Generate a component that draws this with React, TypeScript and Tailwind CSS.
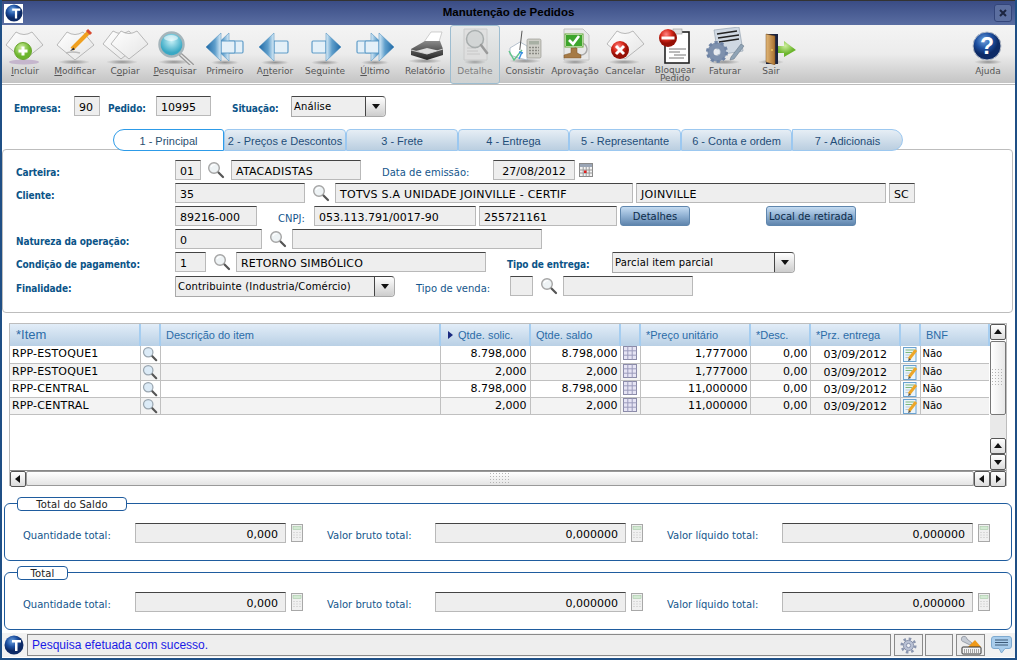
import React from "react";

const VERDANA = "font-['DejaVu_Sans',sans-serif]";

function Defs() {
  return (
    <svg width="0" height="0" className="absolute">
      <defs>
        <linearGradient id="arrow" x1="0" x2="1" y1="0" y2="0">
          <stop offset="0" stopColor="#1f68a4" />
          <stop offset="0.6" stopColor="#5f9fcc" />
          <stop offset="1" stopColor="#dcedf8" />
        </linearGradient>
        <linearGradient id="paper" x1="0" x2="1" y1="0" y2="1">
          <stop offset="0" stopColor="#ffffff" />
          <stop offset="1" stopColor="#e4e4e4" />
        </linearGradient>
        <radialGradient id="shadow">
          <stop offset="0" stopColor="#777" stopOpacity="0.75" />
          <stop offset="1" stopColor="#777" stopOpacity="0" />
        </radialGradient>
        <radialGradient id="lens" cx="0.5" cy="0.35">
          <stop offset="0" stopColor="#c8f2f8" />
          <stop offset="1" stopColor="#38a8c4" />
        </radialGradient>
        <radialGradient id="ball" cx="0.4" cy="0.3">
          <stop offset="0" stopColor="#6fa4e0" />
          <stop offset="0.6" stopColor="#1d4fa0" />
          <stop offset="1" stopColor="#0d2a66" />
        </radialGradient>
        <radialGradient id="red" cx="0.4" cy="0.3">
          <stop offset="0" stopColor="#f88" />
          <stop offset="0.6" stopColor="#d92a1c" />
          <stop offset="1" stopColor="#961006" />
        </radialGradient>
        <radialGradient id="green" cx="0.4" cy="0.3">
          <stop offset="0" stopColor="#cfeea0" />
          <stop offset="1" stopColor="#6bb52c" />
        </radialGradient>
        <linearGradient id="door" x1="0" x2="1">
          <stop offset="0" stopColor="#e3b878" />
          <stop offset="1" stopColor="#a8702f" />
        </linearGradient>
        <linearGradient id="print" x1="0" x2="0" y1="0" y2="1">
          <stop offset="0" stopColor="#8a8a8a" />
          <stop offset="1" stopColor="#222" />
        </linearGradient>
      </defs>
    </svg>
  );
}

const Shadow = ({ cx = 25, cy = 35, rx = 16 }: { cx?: number; cy?: number; rx?: number }) => (
  <ellipse cx={cx} cy={cy} rx={rx} ry="2.5" fill="url(#shadow)" />
);

const DIAMOND = "M6 18 L16 5 Q24 10 32 5 L43 18 L24 33 Z";

function IconSvg({ children }: { children: React.ReactNode }) {
  return (
    <svg width="50" height="38" viewBox="0 0 50 38" className="block">
      {children}
    </svg>
  );
}

function Diamond({ dx = 0, dy = 0 }: { dx?: number; dy?: number }) {
  return <path d={DIAMOND} transform={`translate(${dx} ${dy})`} fill="url(#paper)" stroke="#a8a8a8" strokeWidth="0.8" />;
}

function ArrowIcon({ double, flip }: { double?: boolean; flip?: boolean }) {
  const one = (dx: number) => (
    <g transform={`translate(${dx} 0)`}>
      <path d="M24 14 H37 Q38 14 38 15.5 V24.5 Q38 26 37 26 H24 Z" fill="#e4f0f8" stroke="#5f9cc8" strokeWidth="1.2" />
      <path d="M9 20 L24 6 V34 Z" fill="url(#arrow)" stroke="#3f86bb" strokeWidth="0.5" />
    </g>
  );
  return (
    <IconSvg>
      <Shadow cy={35.5} rx={14} />
      <g transform={flip ? "translate(50 0) scale(-1 1)" : undefined}>
        {double ? (
          <>
            {one(5)}
            {one(-3)}
          </>
        ) : (
          one(0)
        )}
      </g>
    </IconSvg>
  );
}

const IncluirIcon = () => (
  <IconSvg>
    <ellipse cx="24" cy="35" rx="15" ry="2.5" fill="#b9a4c4" opacity="0.7" />
    <Diamond />
    <circle cx="23" cy="24" r="8.5" fill="url(#green)" stroke="#6aa52e" />
    <path d="M23 19.5 V28.5 M18.5 24 H27.5" stroke="#fff" strokeWidth="3" />
  </IconSvg>
);

const ModificarIcon = () => (
  <IconSvg>
    <Shadow cx={24} />
    <Diamond dx={1} />
    <path d="M22 22 L39 5" stroke="#f0a020" strokeWidth="4" />
    <path d="M37 3 L41 7" stroke="#d84a30" strokeWidth="3" />
    <path d="M23.5 20.5 L20 24 L25 22.5 Z" fill="#333" />
    <path d="M16 26 Q22 24 30 26" stroke="#bbb" strokeWidth="1.5" fill="none" />
  </IconSvg>
);

const CopiarIcon = () => (
  <IconSvg>
    <Shadow cx={22} />
    <Diamond dx={-3} dy={-1} />
    <Diamond dx={5} dy={-1} />
  </IconSvg>
);

const PesquisarIcon = () => (
  <IconSvg>
    <Shadow cx={24} cy={35} />
    <path d="M31 28 L42 38" stroke="#999" strokeWidth="4" strokeLinecap="round" />
    <path d="M31 28 L42 38" stroke="#e6e6e6" strokeWidth="1.5" strokeLinecap="round" />
    <circle cx="21.5" cy="17.5" r="12" fill="url(#lens)" stroke="#a5b5bb" strokeWidth="2.5" />
    <ellipse cx="21" cy="11" rx="7" ry="3" fill="#fff" opacity="0.55" />
  </IconSvg>
);

const RelatorioIcon = () => (
  <IconSvg>
    <Shadow cy={34} rx={17} />
    <path d="M24 15 L31 5 H42 L38 18 Z" fill="#fff" stroke="#bbb" strokeWidth="0.7" />
    <path d="M11 22 L25 14 H40 L43 22 V28 L27 33 L11 28 Z" fill="url(#print)" />
    <path d="M11 23 L27 27 L43 22" stroke="#ccc" strokeWidth="1" fill="none" />
    <path d="M16 24 L27 27 L38 23.5 L27 21 Z" fill="#ddd" />
  </IconSvg>
);

const DetalheIcon = () => (
  <IconSvg>
    <g opacity="0.8">
      <Shadow cy={35} rx={11} />
      <path d="M14 2 H37 V33 H14 Z" fill="#dfdfdf" stroke="#c6c6c6" />
      <path d="M17 21 H26 M17 24 H28 M17 27 H30" stroke="#c2c2c2" />
      <circle cx="25" cy="12" r="8.5" fill="#cfd2d2" stroke="#9aa0a0" strokeWidth="1.5" />
      <path d="M31 18 L37 26" stroke="#8a8a8a" strokeWidth="2.5" strokeLinecap="round" />
    </g>
  </IconSvg>
);

const ConsistirIcon = () => (
  <IconSvg>
    <Shadow cy={34} rx={16} />
    <path d="M10 21 L20 15 L27 19 V33 L19 31 L10 28 Z" fill="#fff" stroke="#9ab" strokeWidth="0.7" />
    <path d="M7 4 L14 22" stroke="#444" strokeWidth="0.8" transform="translate(10 0) rotate(28 10 14)" />
    <path d="M9 24 L14 33 L22 23" stroke="#5fc58a" strokeWidth="1.4" fill="none" />
    <path d="M19 32 L22 25 M19 25 L23 26" stroke="#3a8fe0" strokeWidth="1.4" />
    <rect x="27" y="12" width="14" height="19" rx="1.5" fill="#cfcfc8" stroke="#8f8f88" strokeWidth="0.6" />
    <rect x="29" y="14" width="10" height="3.5" fill="#a8b0a4" />
    <path d="M29 20.5 H39 M29 23.5 H39 M29 26.5 H39" stroke="#8a8a84" strokeWidth="1.3" strokeDasharray="2 1" />
  </IconSvg>
);

const AprovacaoIcon = () => (
  <IconSvg>
    <Shadow cx={25} cy={35} rx={13} />
    <path d="M14 2 H33 L39 8 V33 H14 Z" fill="#e8e8e8" stroke="#c2c2c2" />
    <circle cx="31" cy="22" r="6" fill="none" stroke="#aaa" strokeWidth="1.5" />
    <rect x="15" y="7" width="18" height="13" fill="#fff" stroke="#62a832" />
    <rect x="16" y="8" width="16" height="11" fill="#3da52c" />
    <path d="M19 13 L23 17 L29 9" stroke="#fff" strokeWidth="2.6" fill="none" />
    <path d="M21 21 H27 V26 L31 28 V31 H14 V28 L21 26 Z" fill="#a67a45" stroke="#7c5729" strokeWidth="0.5" />
  </IconSvg>
);

const CancelarIcon = () => (
  <IconSvg>
    <Shadow cx={24} />
    <Diamond dx={1} dy={-1} />
    <circle cx="20" cy="23" r="9" fill="url(#red)" />
    <path d="M16 19 L24 27 M24 19 L16 27" stroke="#fff" strokeWidth="3" />
  </IconSvg>
);

const BloquearIcon = () => (
  <IconSvg>
    <rect x="15" y="5" width="24" height="31" fill="#fff" stroke="#222" strokeWidth="1.6" />
    <rect x="23" y="2" width="9" height="5" fill="#ddd" stroke="#999" strokeWidth="0.6" />
    <path d="M19 22 H36 M19 25 H30 M24 28 H36 M19 31 H34" stroke="#777" />
    <circle cx="18" cy="11" r="9" fill="url(#red)" />
    <rect x="11.5" y="9.5" width="13" height="3" fill="#fff" />
  </IconSvg>
);

const FaturarIcon = () => (
  <IconSvg>
    <Shadow cx={24} cy={35} rx={16} />
    <path d="M14 3 L39 0 L43 24 L18 28 Z" fill="#cfd8e2" stroke="#8a98a8" strokeWidth="0.6" />
    <path d="M17 7 L37 4 M18 11 L39 8 M19 15 L39 12" stroke="#222" strokeWidth="1.5" />
    <path d="M31 30 L41 17 L44 19 L34 32 L30 33 Z" fill="#8fa3b5" stroke="#5f6f7f" strokeWidth="0.5" />
    <circle cx="17" cy="25" r="6.5" fill="none" stroke="#7d90ad" strokeWidth="6" />
    <circle cx="17" cy="25" r="9.5" fill="none" stroke="#6f84a5" strokeWidth="3" strokeDasharray="3.2 2.8" />
    <circle cx="17" cy="25" r="2.5" fill="#e6ebf2" />
  </IconSvg>
);

const SairIcon = () => (
  <IconSvg>
    <g transform="translate(5 0)">
      <Shadow cx={20} cy={35} rx={13} />
      <path d="M15 7 H27 V37 H15 Z" fill="#1c2440" />
      <path d="M15 7 L24 9 V38 L15 35 Z" fill="url(#door)" stroke="#7c5222" strokeWidth="0.5" />
      <circle cx="21" cy="23" r="0.9" fill="#f4d060" />
      <path d="M27 19 H33 V14 L45 23 L33 30 V26 H27 Z" fill="url(#green)" />
    </g>
  </IconSvg>
);

const AjudaIcon = () => (
  <IconSvg>
    <Shadow cy={35} rx={14} />
    <circle cx="24" cy="19" r="14" fill="url(#ball)" stroke="#b9bfc9" strokeWidth="1" />
    <text x="24" y="27" textAnchor="middle" fontFamily="'Liberation Sans',sans-serif" fontWeight="700" fontSize="23" fill="#fff">
      ?
    </text>
  </IconSvg>
);

function TotvsLogo({ size }: { size: number }) {
  return (
    <svg width={size} height={size} viewBox="0 0 20 20" className="block">
      <circle cx="10" cy="10" r="9.5" fill="url(#ball)" />
      <path d="M8 5 H17 V7.5 H13.5 V16 H11 V7.5 H8 Z" fill="#fff" />
    </svg>
  );
}

function Lupa() {
  return (
    <svg width="18" height="18" viewBox="0 0 18 18" className="block">
      <path d="M10.5 10.5 L16 16" stroke="#555" strokeWidth="2.2" strokeLinecap="round" />
      <circle cx="7" cy="7" r="5.3" fill="#eef3f5" stroke="#a5a5a5" strokeWidth="1.4" />
      <path d="M4 6 Q5 3.5 8 3.5" stroke="#fff" strokeWidth="1.2" fill="none" />
    </svg>
  );
}

function GridLupa() {
  return (
    <svg width="16" height="16" viewBox="0 0 18 18" className="block">
      <path d="M10.5 10.5 L16 16" stroke="#555" strokeWidth="2.4" strokeLinecap="round" />
      <circle cx="7" cy="7" r="5.3" fill="#dcebf7" stroke="#9aa6b0" strokeWidth="1.4" />
    </svg>
  );
}

function TableIcon() {
  return (
    <svg width="14" height="14" viewBox="0 0 14 14" className="block">
      <rect x="0.5" y="0.5" width="13" height="13" fill="#e6e4f4" stroke="#8b8ba8" />
      <path d="M4.8 0.5 V13.5 M9.2 0.5 V13.5 M0.5 4.8 H13.5 M0.5 9.2 H13.5" stroke="#9c9cbc" />
    </svg>
  );
}

function CalendarIcon() {
  return (
    <svg width="14" height="14" viewBox="0 0 14 14" className="block">
      <rect x="0.5" y="0.5" width="13" height="13" fill="#f2f2f2" stroke="#8a8a8a" />
      <rect x="1" y="1" width="12" height="3" fill="#9aa5b5" />
      <path d="M4.2 4 V13.5 M7.2 4 V13.5 M10.2 4 V13.5 M0.5 7 H13.5 M0.5 10 H13.5" stroke="#9a9a9a" />
      <rect x="5" y="7.5" width="2.5" height="2.5" fill="#e02020" />
    </svg>
  );
}

function EditIcon() {
  return (
    <svg width="15" height="16" viewBox="0 0 15 16" className="block">
      <rect x="0.5" y="1.5" width="12.5" height="14" fill="#eaf4fb" stroke="#6aa2d0" />
      <path d="M2.5 4 H11 M2.5 6.5 H9" stroke="#7cb87c" />
      <path d="M2.5 9 H7 M2.5 11.5 H5" stroke="#b8c8d8" />
      <path d="M6 13 L13 4" stroke="#eda628" strokeWidth="3" />
      <path d="M5 15 L6 12 L8 14 Z" fill="#555" />
    </svg>
  );
}

function CalcIcon() {
  return (
    <svg width="12" height="18" viewBox="0 0 12 18" className="block">
      <rect x="0.5" y="0.5" width="11" height="17" fill="#f0f0f0" stroke="#a8a8a8" />
      <rect x="2" y="2.5" width="8" height="3" fill="#d3ead3" stroke="#9cc49c" strokeWidth="0.5" />
      <path d="M2 8.5 H10 M2 11 H10 M2 13.5 H10" stroke="#d8d8d8" strokeDasharray="2 1" />
    </svg>
  );
}

function Gear({ size }: { size: number }) {
  return (
    <svg width={size} height={size} viewBox="0 0 20 20" className="block">
      <circle cx="10" cy="10" r="6" fill="#b9c1d4" stroke="#7d88a3" />
      <circle cx="10" cy="10" r="8" fill="none" stroke="#8a95ae" strokeWidth="3" strokeDasharray="3 3.28" />
      <circle cx="10" cy="10" r="2.5" fill="#eef0f5" stroke="#7d88a3" />
    </svg>
  );
}

function ToolsIcon() {
  return (
    <svg width="24" height="20" viewBox="0 0 24 20" className="block">
      <path d="M3 2 Q1 6 5 7 L11 10 L13 8 L8 4 Q7 0 3 2 Z" fill="#c5cbd4" stroke="#7f8794" strokeWidth="0.7" />
      <path d="M9 12 L16 5 L22 12 Z" fill="#ef9a1a" />
      <rect x="3" y="12" width="19" height="7" rx="1" fill="#f4f4f4" stroke="#333" />
      <path d="M5 15 H20 M5 17 H20" stroke="#555" strokeDasharray="1 1" />
    </svg>
  );
}

function ChatIcon() {
  return (
    <svg width="21" height="18" viewBox="0 0 21 18" className="block">
      <path d="M3 0.5 H18 Q20.5 0.5 20.5 3 V10 Q20.5 12.5 18 12.5 H14 L10.5 17 L8 12.5 H3 Q0.5 12.5 0.5 10 V3 Q0.5 0.5 3 0.5 Z" fill="#a9cdec" stroke="#7eaad0" />
      <path d="M4 4 H17 M4 6.5 H17 M4 9 H17" stroke="#3d5a78" />
    </svg>
  );
}

function Tri({ dir }: { dir: "up" | "down" | "left" | "right" }) {
  const points = { up: "1,7 9,7 5,2", down: "1,3 9,3 5,8", left: "7,1 7,9 2,5", right: "3,1 3,9 8,5" }[dir];
  return (
    <svg width="10" height="10" viewBox="0 0 10 10" className="block">
      <polygon points={points} fill="#111" />
    </svg>
  );
}

function Grip({ cols, rows }: { cols: number; rows: number }) {
  const dots: React.ReactNode[] = [];
  for (let y = 0; y < rows; y++)
    for (let x = 0; x < cols; x++) dots.push(<rect key={`${x}-${y}`} x={x * 3} y={y * 3} width="1" height="1" fill="#b5b5b5" />);
  return (
    <svg width={cols * 3} height={rows * 3} className="block">
      {dots}
    </svg>
  );
}

function ScrollBtn({ dir, className = "" }: { dir: "up" | "down" | "left" | "right"; className?: string }) {
  return (
    <div className={`flex h-[16px] w-[16px] shrink-0 items-center justify-center rounded-[2px] border border-[#555] bg-gradient-to-b from-white to-[#dcdcdc] ${className}`}>
      <Tri dir={dir} />
    </div>
  );
}

function Field({ className = "", right, children }: { className?: string; right?: boolean; children?: React.ReactNode }) {
  return (
    <div
      className={`flex h-[20px] shrink-0 items-center overflow-hidden whitespace-nowrap border border-[#b9b9b9] border-t-[#444] bg-[#eeeeee] px-[4px] pt-[4px] text-[11px] text-black ${right ? "justify-end pr-[7px]" : ""} ${className}`}
    >
      {children}
    </div>
  );
}

function Select({ className = "", children }: { className?: string; children: React.ReactNode }) {
  return (
    <div className={`flex h-[21px] shrink-0 items-center rounded-r-[4px] border border-[#a9a9a9] border-t-[#444] bg-[#eeeeee] text-[10px] tracking-[0.15px] text-black ${className}`}>
      <span className="flex-1 overflow-hidden whitespace-nowrap pl-[2px] pt-[1px]">{children}</span>
      <span className="flex h-full w-[20px] items-center justify-center rounded-r-[4px] border-l border-[#444] bg-gradient-to-b from-white to-[#cdcdcd]">
        <Tri dir="down" />
      </span>
    </div>
  );
}

function BoldLabel({ className = "", children }: { className?: string; children?: React.ReactNode }) {
  return (
    <span className={`shrink-0 whitespace-nowrap pt-[4px] font-['DejaVu_Sans_Condensed','DejaVu_Sans',sans-serif] text-[10px] font-bold tracking-[-0.1px] text-[#0b5488] ${className}`}>
      {children}
    </span>
  );
}

function PlainLabel({ className = "", children }: { className?: string; children?: React.ReactNode }) {
  return <span className={`shrink-0 whitespace-nowrap pt-[5px] text-[10px] text-[#14568c] ${className}`}>{children}</span>;
}

function BlueButton({ className = "", children }: { className?: string; children: React.ReactNode }) {
  return (
    <div className={`flex h-[20px] shrink-0 items-center justify-center rounded-[3px] border border-[#5f86ad] bg-gradient-to-b from-[#c5dcf2] via-[#8fb0d2] to-[#5f85ad] text-[10px] text-[#0d2c4a] ${className}`}>
      {children}
    </div>
  );
}

function ToolItem({ label, icon, className = "w-[50px]", textClass = "text-[#555]" }: { label: React.ReactNode; icon: React.ReactNode; className?: string; textClass?: string }) {
  return (
    <div className={`flex shrink-0 flex-col items-center pt-[2px] ${className}`}>
      {icon}
      <div className={`mt-[1px] whitespace-nowrap text-center text-[9px] leading-[10px] ${textClass}`}>{label}</div>
    </div>
  );
}

const tabs = [
  { label: "2 - Preços e Descontos", w: "w-[122px]" },
  { label: "3 - Frete", w: "w-[112px]" },
  { label: "4 - Entrega", w: "w-[111px]" },
  { label: "5 - Representante", w: "w-[112px]" },
  { label: "6 - Conta e ordem", w: "w-[111px]" },
];

const rows = [
  { item: "RPP-ESTOQUE1", solic: "8.798,000", saldo: "8.798,000", preco: "1,777000" },
  { item: "RPP-ESTOQUE1", solic: "2,000", saldo: "2,000", preco: "1,777000" },
  { item: "RPP-CENTRAL", solic: "8.798,000", saldo: "8.798,000", preco: "11,000000" },
  { item: "RPP-CENTRAL", solic: "2,000", saldo: "2,000", preco: "11,000000" },
];

const TH = "border-r-2 border-[#a5cdf0] bg-gradient-to-b from-[#e2edf8] to-[#b9d0e5] pl-[5px] text-left text-[11px] font-normal text-[#2b6ca8]";
const TD = "h-[17px] border-r border-b border-[#c0c0c0] p-0 leading-[14px]";

function GroupBox({ title, legendClass, className = "" }: { title: string; legendClass: string; className?: string }) {
  return (
    <div className={`ml-[4px] h-[58px] w-[1008px] shrink-0 rounded-[6px] border border-[#1f5c9e] ${className}`}>
      <div className={`ml-[12px] -mt-[7px] flex h-[14px] items-center justify-center rounded-[4px] border border-[#1f5c9e] bg-white pt-[1px] text-[10px] leading-none tracking-[0.1px] text-[#222] ${legendClass}`}>
        {title}
      </div>
      <div className="mt-[12px] flex items-center pl-[18px]">
        <PlainLabel className="w-[112px]">Quantidade total:</PlainLabel>
        <Field right className="w-[151px]">0,000</Field>
        <span className="ml-[5px] w-[12px]"><CalcIcon /></span>
        <PlainLabel className="ml-[24px] w-[108px]">Valor bruto total:</PlainLabel>
        <Field right className="w-[191px]">0,000000</Field>
        <span className="ml-[5px] w-[12px]"><CalcIcon /></span>
        <PlainLabel className="ml-[24px] w-[115px]">Valor líquido total:</PlainLabel>
        <Field right className="w-[191px]">0,000000</Field>
        <span className="ml-[5px] w-[12px]"><CalcIcon /></span>
      </div>
    </div>
  );
}

export default function App() {
  return (
    <div className={`relative flex h-[660px] w-[1017px] flex-col overflow-hidden bg-white ${VERDANA}`}>
      <Defs />
      {/* title bar */}
      <div className="flex h-[25px] shrink-0 items-center justify-between border-t border-[#333] bg-gradient-to-b from-[#3a4c85] to-[#5a6ea2] pl-[4px] pr-[5px]">
        <div className="flex h-[19px] w-[19px] items-center justify-center bg-white">
          <TotvsLogo size={18} />
        </div>
        <div className="font-['Liberation_Sans',sans-serif] text-[11.5px] font-bold text-black">Manutenção de Pedidos</div>
        <div className="flex h-[18px] w-[18px] items-center justify-center rounded-[3px] border border-[#33457a] bg-[#5c6fa0]">
          <svg width="8" height="8" viewBox="0 0 8 8">
            <path d="M1 1 L7 7 M7 1 L1 7" stroke="#1c2540" strokeWidth="2" />
          </svg>
        </div>
      </div>

      {/* toolbar */}
      <div className="flex h-[58px] shrink-0 bg-gradient-to-b from-[#f4f4f4] via-[#ececec] to-[#c4c4c4] pr-[4px]">
        <ToolItem label={<><u>I</u>ncluir</>} icon={<IncluirIcon />} />
        <ToolItem label={<><u>M</u>odificar</>} icon={<ModificarIcon />} />
        <ToolItem label={<>C<u>o</u>piar</>} icon={<CopiarIcon />} />
        <ToolItem label={<><u>P</u>esquisar</>} icon={<PesquisarIcon />} />
        <ToolItem label="Primeiro" icon={<ArrowIcon double />} />
        <ToolItem label={<>A<u>n</u>terior</>} icon={<ArrowIcon />} />
        <ToolItem label={<>Se<u>g</u>uinte</>} icon={<ArrowIcon flip />} />
        <ToolItem label={<><u>Ú</u>ltimo</>} icon={<ArrowIcon double flip />} />
        <ToolItem label="Relatório" icon={<RelatorioIcon />} />
        <ToolItem
          label="Detalhe"
          icon={<DetalheIcon />}
          textClass="text-[#808080]"
          className="-mb-[1px] w-[50px] rounded-[3px] border border-[#9dbdd0] bg-gradient-to-b from-[#e8eaea] to-[#cfd2d2] !pt-[1px] [&>svg]:-mx-[1px]"
        />
        <ToolItem label="Consistir" icon={<ConsistirIcon />} />
        <ToolItem label="Aprovação" icon={<AprovacaoIcon />} />
        <ToolItem label="Cancelar" icon={<CancelarIcon />} />
        <ToolItem label={<span className="block leading-[8px]">Bloquear<br />Pedido</span>} icon={<BloquearIcon />} />
        <ToolItem label="Faturar" icon={<FaturarIcon />} />
        <ToolItem label="Sair" icon={<SairIcon />} className="w-[42px] [&>svg]:-mx-[4px]" />
        <ToolItem label="Ajuda" icon={<AjudaIcon />} className="ml-auto w-[50px]" />
      </div>
      <div className="mt-[1px] h-[1px] shrink-0 bg-[#bcbcbc]" />

      {/* cabecalho do pedido */}
      <div className="mt-[11px] flex h-[20px] shrink-0 items-center pl-[14px]">
        <BoldLabel className="w-[60px]">Empresa:</BoldLabel>
        <Field className="w-[26px]">90</Field>
        <BoldLabel className="ml-[8px] w-[48px]">Pedido:</BoldLabel>
        <Field className="w-[55px]">10995</Field>
        <BoldLabel className="ml-[21px] w-[59px]">Situação:</BoldLabel>
        <Select className="w-[95px]">Análise</Select>
      </div>

      {/* abas */}
      <div className="relative z-10 mt-[13px] flex h-[22px] shrink-0 pl-[113px] font-['Liberation_Sans',sans-serif] text-[11px] text-[#1f4d78]">
        <div className="flex w-[111px] items-center justify-center rounded-l-[11px] rounded-tr-[3px] border border-[#2d9be8] bg-white pt-[2px] text-[#2a4f70]">1 - Principal</div>
        {tabs.map((t) => (
          <div key={t.label} className={`flex ${t.w} items-center justify-center whitespace-nowrap rounded-t-[4px] border border-[#9cc8f0] bg-gradient-to-b from-[#e6eef5] to-[#bacee0] pt-[2px]`}>
            {t.label}
          </div>
        ))}
        <div className="flex w-[111px] items-center justify-center rounded-r-[11px] border border-[#9cc8f0] bg-gradient-to-b from-[#e6eef5] to-[#bacee0] pt-[2px]">7 - Adicionais</div>
      </div>

      {/* formulario principal */}
      <div className="ml-[2px] -mt-[2px] flex h-[164px] w-[1011px] shrink-0 flex-col rounded-[4px] border border-[#bdbdbd] pl-[13px] pt-[10px]">
        <div className="flex h-[20px] items-center">
          <BoldLabel className="w-[159px]">Carteira:</BoldLabel>
          <Field className="w-[26px]">01</Field>
          <span className="ml-[6px] w-[19px]"><Lupa /></span>
          <Field className="ml-[5px] w-[130px] tracking-[0.25px]">ATACADISTAS</Field>
          <PlainLabel className="ml-[21px] w-[90px]">Data de emissão:</PlainLabel>
          <Field className="ml-[21px] w-[82px] justify-center">27/08/2012</Field>
          <span className="ml-[4px]"><CalendarIcon /></span>
        </div>
        <div className="mt-[3px] flex h-[20px] items-center">
          <BoldLabel className="w-[159px]">Cliente:</BoldLabel>
          <Field className="w-[130px]">35</Field>
          <span className="ml-[7px] w-[18px]"><Lupa /></span>
          <Field className="ml-[5px] w-[298px] tracking-[0.25px]">TOTVS S.A UNIDADE JOINVILLE - CERTIF</Field>
          <Field className="ml-[3px] w-[250px] tracking-[0.25px]">JOINVILLE</Field>
          <Field className="ml-[3px] w-[26px]">SC</Field>
        </div>
        <div className="mt-[3px] flex h-[20px] items-center">
          <BoldLabel className="w-[159px]" />
          <Field className="w-[82px]">89216-000</Field>
          <PlainLabel className="ml-[21px] w-[36px]">CNPJ:</PlainLabel>
          <Field className="w-[162px]">053.113.791/0017-90</Field>
          <Field className="ml-[3px] w-[138px]">255721161</Field>
          <BlueButton className="ml-[3px] w-[70px]">Detalhes</BlueButton>
          <BlueButton className="ml-[76px] w-[90px]">Local de retirada</BlueButton>
        </div>
        <div className="mt-[3px] flex h-[20px] items-center">
          <BoldLabel className="w-[159px]">Natureza da operação:</BoldLabel>
          <Field className="w-[87px]">0</Field>
          <span className="ml-[7px] w-[18px]"><Lupa /></span>
          <Field className="ml-[5px] w-[250px]" />
        </div>
        <div className="mt-[3px] flex h-[20px] items-center">
          <BoldLabel className="w-[159px]">Condição de pagamento:</BoldLabel>
          <Field className="w-[31px]">1</Field>
          <span className="ml-[7px] w-[18px]"><Lupa /></span>
          <Field className="ml-[5px] w-[250px] tracking-[0.15px]">RETORNO SIMBÓLICO</Field>
          <BoldLabel className="ml-[21px] w-[105px]">Tipo de entrega:</BoldLabel>
          <Select className="w-[183px]">Parcial item parcial</Select>
        </div>
        <div className="mt-[4px] flex h-[20px] items-center">
          <BoldLabel className="w-[159px]">Finalidade:</BoldLabel>
          <Select className="w-[220px]">Contribuinte (Industria/Comércio)</Select>
          <PlainLabel className="ml-[21px] w-[94px]">Tipo de venda:</PlainLabel>
          <Field className="w-[23px]" />
          <span className="ml-[7px] w-[18px]"><Lupa /></span>
          <Field className="ml-[5px] w-[130px]" />
        </div>
      </div>

      {/* grade de itens */}
      <div className="ml-[9px] mt-[10px] flex h-[163px] w-[998px] shrink-0 flex-col border border-[#bdbdbd]">
        <div className="flex h-[146px] shrink-0">
          <div className="w-[979px] shrink-0">
            <table className="w-[979px] table-fixed border-collapse">
              <colgroup>
                <col className="w-[130px]" />
                <col className="w-[20px]" />
                <col className="w-[280px]" />
                <col className="w-[90px]" />
                <col className="w-[90px]" />
                <col className="w-[20px]" />
                <col className="w-[110px]" />
                <col className="w-[60px]" />
                <col className="w-[90px]" />
                <col className="w-[20px]" />
                <col className="w-[69px]" />
              </colgroup>
              <thead>
                <tr className="h-[22px] font-['Liberation_Sans',sans-serif]">
                  <th className={`${TH} !pl-[6px] !text-[13px]`}>*Item</th>
                  <th className={TH} />
                  <th className={TH}>Descrição do item</th>
                  <th className={`${TH} !pl-[7px]`}>
                    <span className="mr-[5px] inline-block border-y-[4px] border-l-[5px] border-y-transparent border-l-[#1a2a80]" />
                    Qtde. solic.
                  </th>
                  <th className={TH}>Qtde. saldo</th>
                  <th className={TH} />
                  <th className={TH}>*Preço unitário</th>
                  <th className={TH}>*Desc.</th>
                  <th className={TH}>*Prz. entrega</th>
                  <th className={TH} />
                  <th className={TH}>BNF</th>
                </tr>
              </thead>
              <tbody className="text-[11px] text-black">
                {rows.map((r, i) => (
                  <tr key={i} className={i % 2 ? "bg-[#f3f3f3]" : "bg-white"}>
                    <td className={`${TD} pl-[2px] tracking-[0.15px]`}>{r.item}</td>
                    <td className={TD}><div className="flex h-[16px] justify-center overflow-hidden"><GridLupa /></div></td>
                    <td className={TD} />
                    <td className={`${TD} pr-[3px] text-right`}>{r.solic}</td>
                    <td className={`${TD} pr-[2px] text-right`}>{r.saldo}</td>
                    <td className={TD}><div className="flex h-[16px] justify-center overflow-hidden"><TableIcon /></div></td>
                    <td className={`${TD} pr-[2px] text-right`}>{r.preco}</td>
                    <td className={`${TD} pr-[2px] text-right`}>0,00</td>
                    <td className={`${TD} pl-[13px] pt-[2px]`}>03/09/2012</td>
                    <td className={TD}><div className="flex h-[16px] justify-center overflow-hidden"><EditIcon /></div></td>
                    <td className={`${TD} border-r-0 pl-[2px] text-[10px]`}>Não</td>
                  </tr>
                ))}
              </tbody>
            </table>
          </div>
          <div className="ml-[1px] flex w-[16px] shrink-0 flex-col">
            <ScrollBtn dir="up" />
            <div className="mt-[1px] flex h-[74px] w-[16px] items-center justify-center rounded-[2px] border border-[#777] bg-gradient-to-r from-white to-[#e8e8e8]">
              <Grip cols={4} rows={6} />
            </div>
            <div className="h-[23px] bg-[#e9e9e9]" />
            <ScrollBtn dir="up" />
            <ScrollBtn dir="down" />
          </div>
        </div>
        <div className="flex h-[16px] shrink-0 border-t border-[#888]">
          <ScrollBtn dir="left" />
          <div className="flex flex-1 items-center justify-center rounded-[2px] border border-[#999] bg-gradient-to-b from-white to-[#e4e4e4]">
            <Grip cols={7} rows={4} />
          </div>
          <ScrollBtn dir="left" />
          <ScrollBtn dir="right" />
        </div>
      </div>

      {/* totais */}
      <GroupBox title="Total do Saldo" legendClass="w-[110px]" className="mt-[17px]" />
      <GroupBox title="Total" legendClass="w-[51px]" className="mt-[11px]" />

      {/* barra de status */}
      <div className="mt-[3px] flex h-[24px] shrink-0 items-center bg-[#f2f2f2] pl-[4px]">
        <TotvsLogo size={20} />
        <div className="ml-[3px] flex h-[22px] w-[864px] items-center border border-[#8a8a8a] bg-[#eeeeee] pl-[4px] font-['Liberation_Sans',sans-serif] text-[12px] text-[#1a1ae6]">
          Pesquisa efetuada com sucesso.
        </div>
        <div className="ml-[3px] flex h-[22px] w-[29px] items-center justify-center border border-[#8a8a8a] bg-[#eeeeee]"><Gear size={17} /></div>
        <div className="ml-[2px] h-[22px] w-[28px] border border-[#8a8a8a] bg-[#eeeeee]" />
        <div className="ml-[3px] flex h-[22px] w-[29px] items-center justify-center border border-[#8a8a8a] bg-[#eeeeee]"><ToolsIcon /></div>
        <div className="ml-[6px]"><ChatIcon /></div>
      </div>

      {/* moldura da janela */}
      <div className="pointer-events-none absolute inset-0 border-2 border-t-0 border-[#1f4f85]" />
    </div>
  );
}
